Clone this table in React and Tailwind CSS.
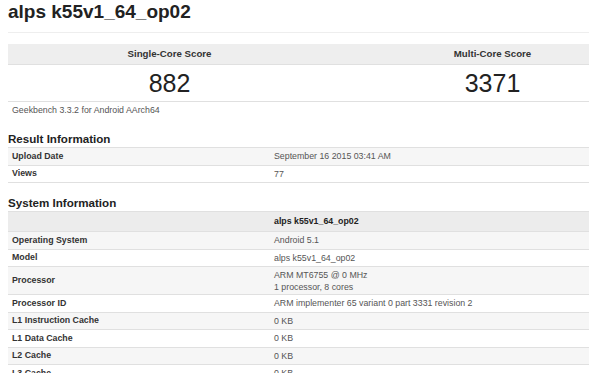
const resultRows = [
  ['Upload Date', 'September 16 2015 03:41 AM'],
  ['Views', '77'],
]

const systemRows = [
  ['Operating System', 'Android 5.1'],
  ['Model', 'alps k55v1_64_op02'],
  ['Processor', 'ARM MT6755 @ 0 MHz\n1 processor, 8 cores'],
  ['Processor ID', 'ARM implementer 65 variant 0 part 3331 revision 2'],
  ['L1 Instruction Cache', '0 KB'],
  ['L1 Data Cache', '0 KB'],
  ['L2 Cache', '0 KB'],
  ['L3 Cache', '0 KB'],
]

function InfoTable({ rows, header }) {
  return (
    <div className="border-t border-[#e0e0e0]">
      {header && (
        <div className="flex h-[20px] items-center bg-[#ececec] border-b border-[#e0e0e0]">
          <div className="w-[262px] shrink-0" />
          <div className="pl-[4px] font-bold text-[#222]">{header}</div>
        </div>
      )}
      {rows.map(([label, value], i) => {
        const lines = value.split('\n')
        const striped = i % 2 === 0
        return (
          <div
            key={label}
            className={`flex items-center border-b border-[#e0e0e0] ${striped ? 'bg-[#f6f6f6]' : 'bg-white'} ${lines.length > 1 ? 'h-[28px]' : 'h-[17.5px]'}`}
          >
            <div className="w-[262px] shrink-0 pl-[4px] font-bold text-[#333]">{label}</div>
            <div className="pl-[4px] leading-[12px] text-[#555]">
              {lines.map((l) => (
                <div key={l}>{l}</div>
              ))}
            </div>
          </div>
        )
      })}
    </div>
  )
}

export default function App() {
  return (
    <div
      className="w-[589px] h-[373px] overflow-hidden bg-white text-[8.8px] text-[#333]"
      style={{ fontFamily: '"Liberation Sans", Arial, sans-serif' }}
    >
      <div className="w-[654px] pl-[8px]">
        <h1 className="text-[19px] leading-[24px] font-bold text-[#222]">alps k55v1_64_op02</h1>
        <div className="mt-[8px] border-t border-[#eeeeee]" />

        {/* scores */}
        <div className="mt-[11px] border-b border-[#e0e0e0]">
          <div className="flex h-[21px] items-center bg-[#eeeeee] border-b border-[#e0e0e0] text-[9.7px] font-bold text-[#333]">
            <div className="flex-1 text-center">Single-Core Score</div>
            <div className="flex-1 text-center">Multi-Core Score</div>
          </div>
          <div className="flex h-[36px] items-center text-[25px] text-[#222]">
            <div className="flex-1 text-center leading-[28px]">882</div>
            <div className="flex-1 text-center leading-[28px]">3371</div>
          </div>
        </div>
        <div className="pl-[4px] pt-[2px] leading-[12px] text-[#555]">Geekbench 3.3.2 for Android AArch64</div>

        <h2 className="mt-[15px] text-[11.6px] leading-[16px] font-bold text-[#222]">Result Information</h2>
        <InfoTable rows={resultRows} />

        <h2 className="mt-[12px] text-[11.6px] leading-[16px] font-bold text-[#222]">System Information</h2>
        <InfoTable rows={systemRows} header="alps k55v1_64_op02" />
      </div>
    </div>
  )
}
